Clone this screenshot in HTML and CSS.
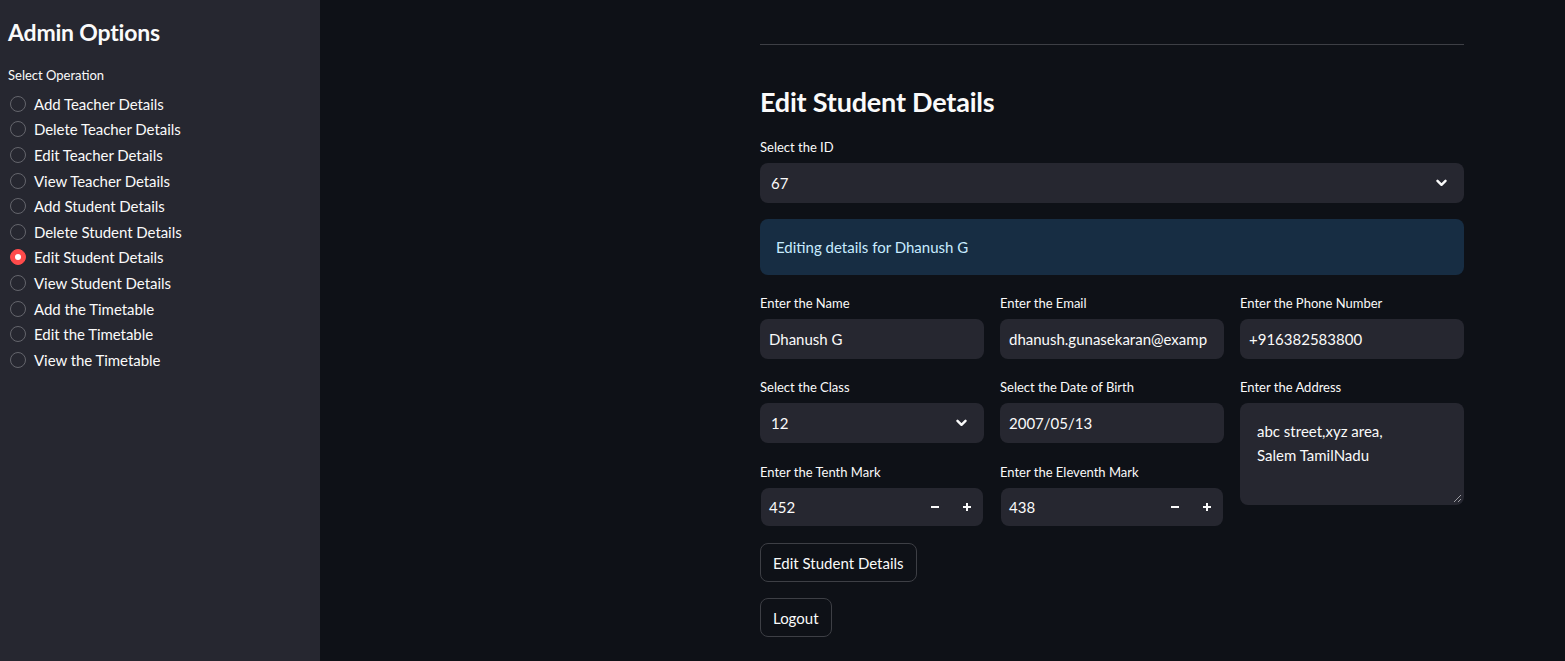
FILE: index.html
```html
<!DOCTYPE html>
<html lang="en">
<head>
<meta charset="utf-8">
<title>Admin</title>
<link rel="stylesheet" href="styles.css">
</head>
<body>
<div class="app">
  <aside class="sidebar">
    <h1 class="side-title">Admin Options</h1>
    <div class="side-label">Select Operation</div>
    <ul class="radios">
      <li class="radio"><span class="dot"></span>Add Teacher Details</li>
      <li class="radio"><span class="dot"></span>Delete Teacher Details</li>
      <li class="radio"><span class="dot"></span>Edit Teacher Details</li>
      <li class="radio"><span class="dot"></span>View Teacher Details</li>
      <li class="radio"><span class="dot"></span>Add Student Details</li>
      <li class="radio"><span class="dot"></span>Delete Student Details</li>
      <li class="radio checked"><span class="dot"></span>Edit Student Details</li>
      <li class="radio"><span class="dot"></span>View Student Details</li>
      <li class="radio"><span class="dot"></span>Add the Timetable</li>
      <li class="radio"><span class="dot"></span>Edit the Timetable</li>
      <li class="radio"><span class="dot"></span>View the Timetable</li>
    </ul>
  </aside>
  <main class="main">
    <div class="block">
      <div class="divider"></div>
      <h2 class="heading">Edit Student Details</h2>
      <div class="field">
        <label class="label">Select the ID</label>
        <div class="input select"><span>67</span>
          <svg class="chev" width="11" height="8" viewBox="0 0 11 8"><path d="M1.5 1.8 L5.5 5.8 L9.5 1.8" fill="none" stroke="#fafafa" stroke-width="2.4" stroke-linecap="round" stroke-linejoin="round"/></svg>
        </div>
      </div>
      <div class="info">Editing details for Dhanush G</div>
      <div class="cols">
        <div class="col">
          <div class="field">
            <label class="label">Enter the Name</label>
            <div class="input text">Dhanush G</div>
          </div>
          <div class="field">
            <label class="label">Select the Class</label>
            <div class="input select"><span>12</span>
              <svg class="chev" width="11" height="8" viewBox="0 0 11 8"><path d="M1.5 1.8 L5.5 5.8 L9.5 1.8" fill="none" stroke="#fafafa" stroke-width="2.4" stroke-linecap="round" stroke-linejoin="round"/></svg>
            </div>
          </div>
          <div class="field">
            <label class="label">Enter the Tenth Mark</label>
            <div class="input number"><span class="num">452</span>
              <span class="step">
                <svg width="12" height="12" viewBox="0 0 12 12"><path d="M2 6 H10" stroke="#fafafa" stroke-width="2"/></svg>
                <svg width="12" height="12" viewBox="0 0 12 12"><path d="M2 6 H10 M6 2 V10" stroke="#fafafa" stroke-width="2"/></svg>
              </span>
            </div>
          </div>
        </div>
        <div class="col">
          <div class="field">
            <label class="label">Enter the Email</label>
            <div class="input text clip">dhanush.gunasekaran@examp</div>
          </div>
          <div class="field">
            <label class="label">Select the Date of Birth</label>
            <div class="input text">2007/05/13</div>
          </div>
          <div class="field">
            <label class="label">Enter the Eleventh Mark</label>
            <div class="input number"><span class="num">438</span>
              <span class="step">
                <svg width="12" height="12" viewBox="0 0 12 12"><path d="M2 6 H10" stroke="#fafafa" stroke-width="2"/></svg>
                <svg width="12" height="12" viewBox="0 0 12 12"><path d="M2 6 H10 M6 2 V10" stroke="#fafafa" stroke-width="2"/></svg>
              </span>
            </div>
          </div>
        </div>
        <div class="col">
          <div class="field">
            <label class="label">Enter the Phone Number</label>
            <div class="input text">+916382583800</div>
          </div>
          <div class="field">
            <label class="label">Enter the Address</label>
            <div class="textarea">abc street,xyz area,<br>Salem TamilNadu
              <svg class="grip" width="9" height="9" viewBox="0 0 9 9"><path d="M1 8 L8 1 M5 8 L8 5" stroke="#9a9aa0" stroke-width="1"/></svg>
            </div>
          </div>
        </div>
      </div>
      <div class="buttons">
        <button class="btn">Edit Student Details</button>
        <button class="btn">Logout</button>
      </div>
    </div>
  </main>
</div>
</body>
</html>
```
FILE: styles.css
```css
* { box-sizing: border-box; }
html, body { margin: 0; padding: 0; }
body {
  background: #0e1117;
  color: #fafafa;
  font-family: "Lato", "Noto Sans", sans-serif;
  overflow: hidden;
}
.app { display: flex; height: 661px; }
.sidebar {
  width: 320px;
  flex: none;
  background: #262730;
  padding: 18px 8px 0 8px;
}
.side-title {
  margin: 0;
  font-size: 23px;
  font-weight: 700;
  line-height: 28px;
  letter-spacing: -0.2px;
}
.side-label {
  margin-top: 21px;
  font-size: 13px;
  line-height: 16px;
}
.radios { list-style: none; margin: 8px 0 0 0; padding: 0; }
.radio {
  display: flex;
  align-items: center;
  height: 25.6px;
  font-size: 15px;
  letter-spacing: -0.05px;
}
.dot {
  width: 16px; height: 16px;
  border-radius: 50%;
  border: 1px solid #64656c;
  margin: 0 8px 0 2px;
  flex: none;
  display: flex; align-items: center; justify-content: center;
}
.radio.checked .dot { background: #ff4b4b; border-color: #ff4b4b; }
.radio.checked .dot::after {
  content: ""; width: 6px; height: 6px; border-radius: 50%; background: #fff;
}
.main { flex: 1; min-width: 0; }
.block { width: 704px; margin-left: 440px; padding-top: 44px; }
.divider { height: 1px; background: #3d3f45; }
.heading {
  margin: 40px 0 0 0;
  font-size: 27px;
  font-weight: 700;
  line-height: 34px;
  letter-spacing: -0.2px;
}
.field { display: flex; flex-direction: column; min-width: 0; }
.heading + .field { margin-top: 18px; }
.label { height: 20px; line-height: 20px; font-size: 13px; margin-bottom: 6px; }
.input {
  height: 40px;
  background: #262730;
  border-radius: 8px;
  display: flex;
  align-items: center;
  font-size: 15px;
  min-width: 0;
}
.text { padding: 0 9px; }
.clip { overflow: hidden; white-space: nowrap; }
.select { padding: 0 17px 0 11px; justify-content: space-between; }
.info {
  margin-top: 16px;
  height: 56px;
  background: #172d43;
  color: #c7ebff;
  border-radius: 8px;
  padding: 0 16px;
  display: flex; align-items: center;
  font-size: 15px;
}
.cols {
  display: grid;
  grid-template-columns: repeat(3, minmax(0, 1fr));
  gap: 16px;
  margin-top: 18px;
}
.col { display: flex; flex-direction: column; min-width: 0; }
.col .field + .field { margin-top: 18px; }
.col .field:nth-child(3) { margin-top: 19px; }
.number { height: 38px; margin: 0 1px; padding: 0 0 0 8px; justify-content: space-between; }
.step { display: flex; gap: 20px; padding-right: 10px; }
.textarea {
  position: relative;
  height: 102px;
  background: #262730;
  border-radius: 8px;
  padding: 16px 17px;
  font-size: 15px;
  line-height: 24px;
}
.grip { position: absolute; right: 2px; bottom: 2px; }
.buttons { display: flex; flex-direction: column; align-items: flex-start; gap: 16px; margin-top: 17px; }
.btn {
  background: #0e1117;
  color: #fafafa;
  border: 1px solid #3d3f45;
  border-radius: 8px;
  height: 39px;
  padding: 0 12px;
  font-family: inherit;
  font-size: 15px;
}
```
